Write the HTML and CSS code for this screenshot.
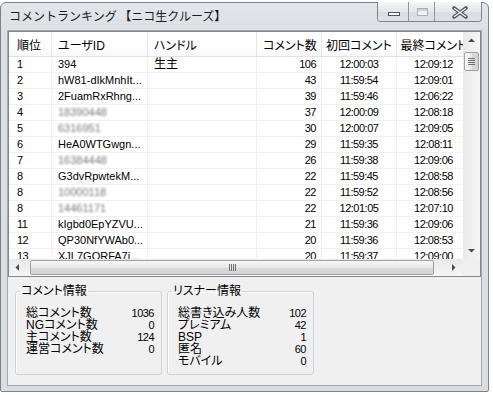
FILE: index.html
```html
<!DOCTYPE html>
<html lang="ja">
  <head>
    <meta charset="UTF-8" />
    <meta name="viewport" content="width=device-width, initial-scale=1.0" />
    <title>コメントランキング</title>
    <link rel="stylesheet" href="styles.css">
  </head>

  <body>
    <div class="window">
      <div class="titlebar">
        <span class="title">コメントランキング 【ニコ生クルーズ】</span>
        <div class="caption">
          <button class="cap-min">
            <svg width="30" height="20" viewBox="0 0 30 20"><rect x="10.5" y="10.5" width="11" height="3" fill="#fff" stroke="#50565e"/></svg>
          </button>
          <button class="cap-max">
            <svg width="26" height="20" viewBox="0 0 26 20"><rect x="8.5" y="6.5" width="10" height="7" fill="#f1f3f5" stroke="#a9b0b8"/><line x1="9" y1="8" x2="18" y2="8" stroke="#a9b0b8"/></svg>
          </button>
          <button class="cap-close">
            <svg width="47" height="20" viewBox="0 0 47 20"><path d="M19 6 L31 15 M31 6 L19 15" stroke="#4f565e" stroke-width="3.6" stroke-linecap="round"/><path d="M19.5 6.5 L30.5 14.5 M30.5 6.5 L19.5 14.5" stroke="#eef1f4" stroke-width="1.4" stroke-linecap="round"/></svg>
          </button>
        </div>
      </div>

      <div class="client">
        <div class="listview">
          <div class="list-main">
            <div class="list-area">
              <table class="ranking">
                <thead>
                  <tr>
                    <th class="c-rank">順位</th>
                    <th class="c-id">ユーザID</th>
                    <th class="c-handle">ハンドル</th>
                    <th class="c-count num">コメント数</th>
                    <th class="c-first time">初回コメント</th>
                    <th class="c-last time">最終コメント</th>
                  </tr>
                </thead>
                <tbody>
                  <tr><td class="rank">1</td><td>394</td><td class="jp">生主</td><td class="num">106</td><td class="time">12:00:03</td><td class="time">12:09:12</td></tr>
                  <tr><td class="rank">2</td><td>hW81-dIkMnhIt...</td><td></td><td class="num">43</td><td class="time">11:59:54</td><td class="time">12:09:01</td></tr>
                  <tr><td class="rank">3</td><td>2FuamRxRhng...</td><td></td><td class="num">39</td><td class="time">11:59:46</td><td class="time">12:06:22</td></tr>
                  <tr><td class="rank">4</td><td><span class="mosaic">18390448</span></td><td></td><td class="num">37</td><td class="time">12:00:09</td><td class="time">12:08:18</td></tr>
                  <tr><td class="rank">5</td><td><span class="mosaic">6316951</span></td><td></td><td class="num">30</td><td class="time">12:00:07</td><td class="time">12:09:05</td></tr>
                  <tr><td class="rank">6</td><td>HeA0WTGwgn...</td><td></td><td class="num">29</td><td class="time">11:59:35</td><td class="time">12:08:11</td></tr>
                  <tr><td class="rank">7</td><td><span class="mosaic">16384448</span></td><td></td><td class="num">26</td><td class="time">11:59:38</td><td class="time">12:09:06</td></tr>
                  <tr><td class="rank">8</td><td>G3dvRpwtekM...</td><td></td><td class="num">22</td><td class="time">11:59:45</td><td class="time">12:08:58</td></tr>
                  <tr><td class="rank">8</td><td><span class="mosaic">10000118</span></td><td></td><td class="num">22</td><td class="time">11:59:52</td><td class="time">12:08:56</td></tr>
                  <tr><td class="rank">8</td><td><span class="mosaic">14461171</span></td><td></td><td class="num">22</td><td class="time">12:01:05</td><td class="time">12:07:10</td></tr>
                  <tr><td class="rank">11</td><td>kIgbd0EpYZVU...</td><td></td><td class="num">21</td><td class="time">11:59:36</td><td class="time">12:09:06</td></tr>
                  <tr><td class="rank">12</td><td>QP30NfYWAb0...</td><td></td><td class="num">20</td><td class="time">11:59:36</td><td class="time">12:08:53</td></tr>
                  <tr><td class="rank">13</td><td>XJL7GORFA7i...</td><td></td><td class="num">20</td><td class="time">11:59:37</td><td class="time">12:09:00</td></tr>
                </tbody>
              </table>
            </div>
            <div class="vscroll">
              <div class="sb-btn">
                <svg width="17" height="17" viewBox="0 0 17 17"><polygon points="5,10 8.5,6.5 12,10" fill="#4d4d4d"/></svg>
              </div>
              <div class="vtrack">
                <div class="vthumb">
                  <svg width="7" height="7" viewBox="0 0 7 7"><path d="M0 0.5 H7 M0 2.5 H7 M0 4.5 H7 M0 6.5 H7" stroke="#6f6f6f"/></svg>
                </div>
              </div>
              <div class="sb-btn">
                <svg width="17" height="17" viewBox="0 0 17 17"><polygon points="5,7 8.5,10.5 12,7" fill="#4d4d4d"/></svg>
              </div>
            </div>
          </div>
          <div class="hscroll-row">
            <div class="hscroll">
              <div class="sb-btn">
                <svg width="17" height="17" viewBox="0 0 17 17"><polygon points="10,5 6.5,8.5 10,12" fill="#4d4d4d"/></svg>
              </div>
              <div class="htrack">
                <div class="hthumb">
                  <svg width="7" height="7" viewBox="0 0 7 7"><path d="M0.5 0 V7 M2.5 0 V7 M4.5 0 V7 M6.5 0 V7" stroke="#6f6f6f"/></svg>
                </div>
              </div>
              <div class="sb-btn">
                <svg width="17" height="17" viewBox="0 0 17 17"><polygon points="7,5 10.5,8.5 7,12" fill="#4d4d4d"/></svg>
              </div>
            </div>
            <div class="sb-corner"></div>
          </div>
        </div>

        <div class="info">
          <fieldset class="group">
            <legend>コメント情報</legend>
            <dl class="stats">
              <dt>総コメント数</dt><dd>1036</dd>
              <dt>NGコメント数</dt><dd>0</dd>
              <dt>主コメント数</dt><dd>124</dd>
              <dt>運営コメント数</dt><dd>0</dd>
            </dl>
          </fieldset>
          <fieldset class="group">
            <legend>リスナー情報</legend>
            <dl class="stats">
              <dt>総書き込み人数</dt><dd>102</dd>
              <dt>プレミアム</dt><dd>42</dd>
              <dt>BSP</dt><dd>1</dd>
              <dt>匿名</dt><dd>60</dd>
              <dt>モバイル</dt><dd>0</dd>
            </dl>
          </fieldset>
        </div>
      </div>
    </div>
  </body>
</html>
```

FILE: styles.css
```css
* {
  box-sizing: border-box;
}
body {
  margin: 0;
  background: #fff;
  font-family: "Liberation Sans", "Noto Sans CJK JP", sans-serif;
  font-size: 12px;
  color: #000;
  font-feature-settings: "palt";
}

/* window frame */
.window {
  width: 489px;
  height: 390px;
  margin-top: 2px;
  border: 1px solid #7b828a;
  border-radius: 6px 6px 2px 2px;
  background: linear-gradient(#e3e6ea, #dce0e5 28px, #dadee3);
  padding: 0 7px 6px;
  display: flex;
  flex-direction: column;
}
.titlebar {
  height: 28px;
  display: flex;
  justify-content: space-between;
  align-items: flex-start;
}
.title {
  padding: 7px 0 0 1px;
  line-height: 12px;
  font-family: "Noto Sans CJK JP", sans-serif;
  font-feature-settings: normal;
  color: #1c1c1c;
}
.caption {
  display: flex;
  height: 20px;
  margin: -1px -1px 0 0;
  border: 1px solid #7d858f;
  border-top: none;
  border-radius: 0 0 4px 4px;
  overflow: hidden;
}
.caption button {
  display: block;
  height: 100%;
  margin: 0;
  padding: 0;
  border: none;
  background: linear-gradient(#f3f5f7, #e4e8ec 50%, #d8dde3 51%, #dfe3e8);
}
.caption button + button {
  border-left: 1px solid #8d959e;
}
.caption svg {
  display: block;
}
.cap-min { width: 30px; }
.cap-max { width: 26px; }
.cap-close { width: 47px; }

.client {
  flex: 1;
  display: flex;
  flex-direction: column;
  background: #f0f0f0;
  box-shadow: 0 0 0 1px #a3a8ae;
}

/* list view */
.listview {
  height: 246px;
  border: 1px solid #828790;
  background: #fff;
  display: flex;
  flex-direction: column;
}
.list-main {
  flex: 1;
  display: flex;
  min-height: 0;
}
.list-area {
  width: 454px;
  overflow: hidden;
}
.ranking {
  width: 462px;
  table-layout: fixed;
  border-collapse: separate;
  border-spacing: 0;
}
.ranking th,
.ranking td {
  padding: 0 5px 0 6px;
  white-space: nowrap;
  overflow: hidden;
  text-align: left;
  font-weight: normal;
}
.ranking th {
  height: 25px;
  border-right: 1px solid #e3e6ea;
  border-bottom: 1px solid #e0e3e7;
  background: linear-gradient(#fff, #fff 60%, #f7f8f9);
}
.ranking td {
  height: 16px;
  line-height: 15px;
  font-size: 11px;
  border-right: 1px solid #f0f0f0;
  border-bottom: 1px solid #f0f0f0;
}
.ranking th:first-child,
.ranking td:first-child {
  padding-left: 8px;
}
.ranking .num {
  text-align: right;
}
.ranking .time {
  text-align: center;
  padding: 0;
}
.ranking td.rank,
.ranking td.num,
.ranking td.time {
  letter-spacing: -0.5px;
}
.ranking td.jp {
  font-size: 12px;
}
.c-rank { width: 43px; }
.c-id { width: 96px; }
.c-handle { width: 109px; }
.c-count { width: 65px; }
.c-first { width: 75px; }
.c-last { width: 74px; }

.mosaic {
  color: #7a7a7a;
  filter: blur(1px);
}

/* scrollbars */
.vscroll {
  width: 17px;
  display: flex;
  flex-direction: column;
  background: linear-gradient(to right, #e9e9e9, #f6f6f6);
}
.sb-btn {
  width: 17px;
  height: 17px;
  flex: none;
}
.sb-btn svg {
  display: block;
}
.vtrack {
  flex: 1;
  padding: 3px 1px 0;
}
.vthumb {
  height: 19px;
  border: 1px solid #a2a2a2;
  border-radius: 2px;
  background: linear-gradient(to right, #f7f7f7, #e9e9e9 50%, #dadada 51%, #d4d4d4);
  display: flex;
  justify-content: center;
  align-items: center;
}
.hscroll-row {
  height: 17px;
  display: flex;
}
.hscroll {
  width: 453px;
  display: flex;
  background: linear-gradient(#e9e9e9, #f6f6f6);
}
.htrack {
  flex: 1;
  display: flex;
  padding: 1px 11px 0 4px;
}
.hthumb {
  flex: 1;
  height: 15px;
  border: 1px solid #a2a2a2;
  border-radius: 2px;
  background: linear-gradient(#f7f7f7, #e9e9e9 50%, #dadada 51%, #d4d4d4);
  display: flex;
  justify-content: center;
  align-items: center;
}
.sb-corner {
  flex: 1;
  background: #f0f0f0;
}

/* info group boxes */
.info {
  display: flex;
  gap: 5px;
  padding: 8px 0 0 7px;
}
.group {
  width: 147px;
  height: 90px;
  min-width: 0;
  margin: 0;
  padding: 10px 7px 0 4px;
  border: 1px solid #ccd3d9;
  border-radius: 3px;
  box-shadow: inset 1px 1px 0 #fff;
}
.group legend {
  padding: 0 1px;
  line-height: 12px;
}
.stats {
  display: grid;
  grid-template-columns: 1fr auto;
  margin: 0;
  padding-left: 6px;
  line-height: 12px;
}
.stats dt,
.stats dd {
  margin: 0;
  white-space: nowrap;
}
.stats dd {
  font-size: 11px;
  letter-spacing: -0.5px;
  text-align: right;
}
```
